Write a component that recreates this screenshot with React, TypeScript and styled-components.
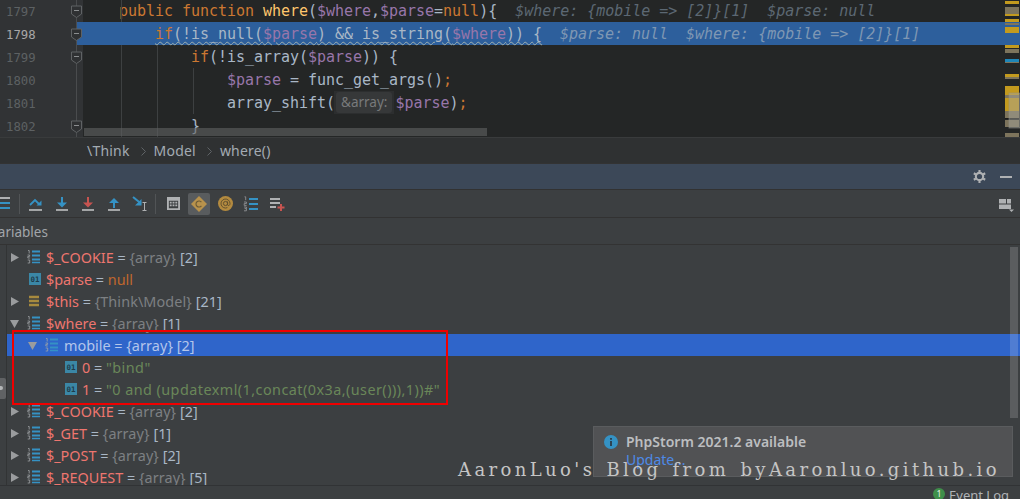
import React from "react";
import styled, { createGlobalStyle } from "styled-components";

const Global = createGlobalStyle`
  html, body { margin: 0; padding: 0; background: #3c3f41; }
  * { box-sizing: border-box; }
`;

const MONO = `"DejaVu Sans Mono", "Liberation Mono", monospace`;
const SANS = `"Noto Sans", "Open Sans", sans-serif`;

const Page = styled.div`
  width: 1020px;
  height: 499px;
  overflow: hidden;
  position: relative;
  display: flex;
  flex-direction: column;
  background: #3c3f41;
  font-family: ${SANS};
`;

/* ---------- editor ---------- */
const Editor = styled.div`
  height: 138px;
  flex: none;
  position: relative;
  overflow: hidden;
  background: #242626;
  border-bottom: 1px solid #393b3c;
`;
const Row = styled.div`
  height: 23px;
  display: grid;
  grid-template-columns: 77px 6px 1fr;
  grid-template-rows: 23px;
  &:first-child { margin-top: -1px; }
`;
const LineNo = styled.div<{ $active?: boolean }>`
  background: #313335;
  border-right: 1px solid #4a4c4e;
  color: ${(p) => (p.$active ? "#a9a8a8" : "#5d6163")};
  font: 12.3px/23px ${MONO};
  padding: 2px 0 0 6px;
`;
const FoldCell = styled.div<{ $active?: boolean }>`
  background: ${(p) => (p.$active ? "#2d5f9c" : "#313335")};
`;
const FoldSvg = styled.svg`
  display: block;
  margin-left: -6px;
  width: 12px;
  height: 23px;
  overflow: visible;
`;
const Code = styled.div<{ $active?: boolean; $indent: number }>`
  background: ${(p) => (p.$active ? "#2d5f9c" : "transparent")};
  color: #a9b7c6;
  font: 15px/23px ${MONO};
  letter-spacing: -0.03px;
  padding: 1px 0 0 ${(p) => 36 + p.$indent * 36}px;
  white-space: pre;
`;
const Kw = styled.span`color: #cc7832;`;
const Fn = styled.span`color: #ffc66d;`;
const Var = styled.span`color: #9876aa;`;
const Squiggle = styled.span`
  text-decoration: underline wavy #9fb0b0 1px;
  text-underline-offset: 2px;
`;
const Hint = styled.span<{ $on?: boolean }>`
  font-style: italic;
  color: ${(p) => (p.$on ? "#7f97b3" : "#5c6873")};
  margin-left: 18px;
`;
const ParamHint = styled.span`
  display: inline-block;
  height: 23px;
  padding: 0 2px;
  margin: -1px 1px 0 -1px;
  background: #2c2e2f;
  vertical-align: top;
`;
const ParamLabel = styled.span`
  display: inline-block;
  height: 21px;
  margin-top: 1px;
  padding: 0 5px;
  background: #363839;
  border-radius: 3px;
  color: #787a7b;
  font: 13.5px/21px ${SANS};
  letter-spacing: 0;
  vertical-align: top;
`;
const Guide = styled.div<{ $x: number; $y: number; $h: number }>`
  position: absolute;
  left: ${(p) => p.$x}px;
  top: ${(p) => p.$y}px;
  height: ${(p) => p.$h}px;
  width: 1px;
  background: #3d4041;
`;
const HScroll = styled.div`
  position: absolute;
  left: 84px;
  bottom: 1px;
  width: 403px;
  height: 8px;
  background: rgba(96, 98, 98, 0.6);
`;
const Stripes = styled.svg`
  position: absolute;
  right: 0;
  top: 0;
  width: 15px;
  height: 137px;
`;

/* ---------- breadcrumb ---------- */
const Crumbs = styled.div`
  height: 25px;
  flex: none;
  display: flex;
  align-items: center;
  padding-left: 87px;
  background: #2f3132;
  color: #a3abb2;
  font-size: 14px;
  letter-spacing: 0.2px;
`;
const Chevron = styled.svg`
  width: 5px;
  height: 9px;
  margin: 1px 8px 0 11px;
`;

/* ---------- debug panel ---------- */
const TitleBar = styled.div`
  height: 26px;
  flex: none;
  display: flex;
  align-items: center;
  justify-content: flex-end;
  gap: 14px;
  padding-right: 8px;
  background: #3c4858;
  border-top: 1px solid #333;
`;
const Toolbar = styled.div`
  height: 29px;
  flex: none;
  display: flex;
  align-items: center;
  padding-right: 5px;
  border-top: 1px solid #323232;
  border-bottom: 1px solid #323232;
  background: #3c3f41;
`;
const ToolSlot = styled.div<{ $on?: boolean }>`
  width: 22px;
  height: 22px;
  margin-right: 4px;
  flex: none;
  display: flex;
  align-items: center;
  justify-content: center;
  border-radius: 2px;
  background: ${(p) => (p.$on ? "#595c5e" : "transparent")};
`;
const ToolSep = styled.div<{ $l: number; $r: number }>`
  width: 1px;
  height: 20px;
  flex: none;
  background: #515456;
  margin: 0 ${(p) => p.$r}px 0 ${(p) => p.$l}px;
`;
const Spacer = styled.div`flex: 1;`;
const VarHead = styled.div`
  height: 27px;
  flex: none;
  padding-top: 1px;
  color: #a2a6aa;
  font-size: 13.5px;
  line-height: 26px;
  text-indent: -10px;
  border-bottom: 1px solid #333;
`;
const TreeWrap = styled.div`
  flex: 1;
  min-height: 0;
  position: relative;
  overflow: hidden;
  padding: 1px 0 0 7px;
`;
const LeftRail = styled.div`
  position: absolute;
  left: 6px;
  top: 0;
  bottom: 0;
  width: 1px;
  background: #323435;
`;
const RailHandle = styled.div`
  position: absolute;
  left: 0;
  top: 133px;
  width: 6px;
  height: 21px;
  background: #606264;
  border-radius: 0 2px 2px 0;
  &::after {
    content: "";
    position: absolute;
    left: 0;
    top: 8px;
    width: 3px;
    height: 4px;
    background: #b4b6b8;
    border-radius: 0 2px 2px 0;
  }
`;
const VScroll = styled.div`
  position: absolute;
  right: 2px;
  top: 2px;
  width: 8px;
  height: 171px;
  background: rgba(255, 255, 255, 0.16);
`;
const TreeRow = styled.div<{ $sel?: boolean; $depth: number }>`
  height: 22px;
  display: flex;
  align-items: center;
  padding-left: ${(p) => p.$depth * 18}px;
  background: ${(p) => (p.$sel ? "#2f65ca" : "transparent")};
  font-size: 14.4px;
  white-space: pre;
`;
const Arrow = styled.svg`
  width: 9px;
  height: 9px;
  flex: none;
  margin: 0 8px 0 3px;
`;
const ArrowGap = styled.div`
  width: 22px;
  flex: none;
`;
const Name = styled.span<{ $sel?: boolean }>`
  margin-left: 5px;
  color: ${(p) => (p.$sel ? "#b4c6ea" : "#ee766f")};
`;
const Eq = styled.span<{ $sel?: boolean }>`
  color: ${(p) => (p.$sel ? "#b4c6ea" : "#a9b7c6")};
`;
const TypeTxt = styled.span<{ $sel?: boolean }>`
  color: ${(p) => (p.$sel ? "#b4c6ea" : "#7d8083")};
  letter-spacing: 0.1px;
`;
const Count = styled.span<{ $sel?: boolean }>`
  color: ${(p) => (p.$sel ? "#b4c6ea" : "#a9b7c6")};
`;
const NullTxt = styled.span`color: #c0672d;`;
const Str = styled.span`
  color: #6a8759;
  letter-spacing: 0.45px;
`;

const RedBox = styled.div`
  position: absolute;
  left: 12px;
  top: 330px;
  width: 436px;
  height: 75px;
  border: 2px solid #f00000;
  pointer-events: none;
`;

/* ---------- notification ---------- */
const Toast = styled.div`
  position: absolute;
  left: 593px;
  top: 426px;
  width: 420px;
  height: 51px;
  background: #515254;
  border: 1px solid #5a5c5e;
  padding: 6px 0 0 10px;
  display: grid;
  grid-template-columns: 14px 1fr;
  column-gap: 8px;
  align-content: start;
`;
const ToastTitle = styled.div`
  color: #bcbec0;
  font-size: 14px;
  font-weight: 600;
  line-height: 18px;
`;
const ToastLink = styled.div`
  grid-column: 2;
  color: #4d8ae8;
  font-size: 14px;
  line-height: 18px;
`;
const Watermark = styled.div`
  position: absolute;
  left: 458px;
  top: 458px;
  color: #c5c5c5;
  font-family: "DejaVu Serif", serif;
  font-size: 18px;
  line-height: 24px;
  letter-spacing: 3.4px;
  word-spacing: 2px;
  white-space: pre;
`;

/* ---------- status ---------- */
const Status = styled.div`
  height: 14px;
  flex: none;
  border-top: 1px solid #313335;
  background: #3c3f41;
  display: flex;
  justify-content: flex-end;
  padding-right: 11px;
  gap: 4px;
  color: #b0b3b6;
  font-size: 13px;
  line-height: 18px;
  overflow: hidden;
`;
const Badge = styled.span`
  display: inline-block;
  width: 12px;
  height: 12px;
  margin-top: 2px;
  border-radius: 50%;
  background: #3f8f4a;
  color: #e8f2e8;
  font-size: 9px;
  line-height: 12px;
  text-align: center;
`;

/* ---------- icons ---------- */
const BLUE = "#3592c4";
const GREY = "#afb1b3";
const RED = "#c75450";

const Fold = () => (
  <FoldSvg viewBox="0 0 12 23">
    <path d="M.5 7h10v8l-5 3.5-5-3.5z" fill="#2f3133" stroke="#5f6264" />
    <path d="M3 11.5h5" stroke="#8a8d8f" />
  </FoldSvg>
);
const Icon = styled.svg`
  width: 16px;
  height: 16px;
  display: block;
  flex: none;
`;
const ListIcon = () => (
  <Icon viewBox="0 0 14 14" style={{ width: 14, height: 14 }}>
    <path d="M5 1.5h8M5 5.5h8M5 9.5h8" stroke={BLUE} strokeWidth="2" />
    <path d="M5 12.5h8" stroke={BLUE} strokeWidth="1.5" />
    <path d="M1 0.5h1.2v3M0.6 5h2v1.4H0.8V8h2M0.7 10h2v3h-2" stroke="#a0a3a6" strokeWidth=".8" fill="none" />
  </Icon>
);
const PrimIcon = () => (
  <Icon viewBox="0 0 12 12" style={{ width: 12, height: 12 }}>
    <rect width="12" height="12" fill="#3b87a6" />
    <text x="6" y="9" fontSize="7.5" fontWeight="700" fill="#1f3c4b" textAnchor="middle" fontFamily={MONO}>01</text>
  </Icon>
);
const ObjIcon = () => (
  <Icon viewBox="-2 0 14 12" style={{ width: 14, height: 12 }}>
    <path d="M0 2h10M0 6h10M0 10h10" stroke="#a78a3e" strokeWidth="2.4" />
  </Icon>
);
const StepOver = () => (
  <Icon viewBox="0 0 16 16">
    <path d="M2 9l5-5 4 4" fill="none" stroke={BLUE} strokeWidth="1.8" />
    <path d="M8.5 9.5h5v-5z" fill={BLUE} />
    <path d="M1 14h13" stroke={GREY} strokeWidth="1.8" />
  </Icon>
);
const StepDown = ({ c }: { c: string }) => (
  <Icon viewBox="0 0 16 16">
    <path d="M8 1v6" stroke={c} strokeWidth="2" />
    <path d="M3 6.5h10L8 11.5z" fill={c} />
    <path d="M2 14h12" stroke={GREY} strokeWidth="1.8" />
  </Icon>
);
const StepUp = () => (
  <Icon viewBox="0 0 16 16">
    <path d="M8 12V6" stroke={BLUE} strokeWidth="2" />
    <path d="M3 7h10L8 2z" fill={BLUE} />
    <path d="M2 14h12" stroke={GREY} strokeWidth="1.8" />
  </Icon>
);
const RunToCursor = () => (
  <Icon viewBox="0 0 16 16" style={{ overflow: "visible" }}>
    <path d="M1 1l8 6.5" stroke={BLUE} strokeWidth="2" />
    <path d="M9.5 3v6.5H3z" fill={BLUE} />
    <path d="M10.5 6.5h4M10.5 14.5h4M12.5 6.5v8" stroke={GREY} strokeWidth="1" fill="none" />
  </Icon>
);
const Calc = () => (
  <Icon viewBox="0 0 14 14" style={{ width: 13, height: 13 }}>
    <path fillRule="evenodd" d="M0 0h14v14H0zM2 4v8h10V4z" fill={GREY} />
    <path d="M3 5h2v2H3zM6 5h2v2H6zM9 5h2v2H9zM3 8h2v2H3zM6 8h2v2H6zM9 8h2v2H9z" fill={GREY} />
  </Icon>
);
const Diamond = () => (
  <Icon viewBox="0 0 16 16">
    <path d="M8 0l8 8-8 8-8-8z" fill="#b8924c" />
    <path d="M10.4 6.2A3 3 0 1 0 10.4 9.8" fill="none" stroke="#6b5a35" strokeWidth="1.1" />
  </Icon>
);
const AtIcon = () => (
  <Icon viewBox="0 0 16 16" style={{ width: 15, height: 15 }}>
    <circle cx="8" cy="8" r="8" fill="#b38a3f" />
    <circle cx="8" cy="8" r="2.2" fill="none" stroke="#5f4e2e" strokeWidth="1" />
    <path d="M10.2 5.8v3.4c0 1.6 2.6 1.4 2.6-1.2A4.8 4.8 0 1 0 10 12.4" fill="none" stroke="#5f4e2e" strokeWidth="1" />
  </Icon>
);
const OrderedIcon = () => (
  <Icon viewBox="0 0 16 16">
    <path d="M6 3h9M6 8h9M6 13h9" stroke={BLUE} strokeWidth="2" />
    <path d="M1.5 .8h1.2v3.4M1 6h2.4v1.6H1.2v1.8h2.4M1 11h2.4v1.6H1.6M3.4 12.6v2.2H1" stroke="#8e9194" strokeWidth=".9" fill="none" />
  </Icon>
);
const AddWatch = () => (
  <Icon viewBox="0 0 16 16">
    <path d="M1 3h10M1 7h10M1 11h6" stroke={GREY} strokeWidth="1.8" />
    <path d="M12 8v7M8.5 11.5h7" stroke={RED} strokeWidth="2" />
  </Icon>
);
const Rerun = () => (
  <Icon viewBox="0 0 10 16" style={{ width: 10, height: 16 }}>
    <path d="M0 2h10" stroke={GREY} strokeWidth="2" />
    <path d="M0 7h10M0 12h10" stroke={BLUE} strokeWidth="2" />
  </Icon>
);
const LayoutIcon = () => (
  <Icon viewBox="0 0 16 16">
    <path d="M0 3h7v4.5H0zM8 3h4v4.5H8zM0 8.5h12V13H0z" fill={GREY} />
    <path d="M10 13.5h5L12.5 16z" fill={GREY} />
  </Icon>
);
const Gear = () => (
  <Icon viewBox="0 0 16 16" style={{ width: 13, height: 13 }}>
    <circle cx="8" cy="8" r="4.5" fill="none" stroke={GREY} strokeWidth="2.6" />
    <path d="M8 0v3M8 13v3M1 4l2.6 1.5M12.4 10.5L15 12M1 12l2.6-1.5M12.4 5.5L15 4" stroke={GREY} strokeWidth="2.6" />
  </Icon>
);
const Minimize = styled.div`
  width: 12px;
  height: 2px;
  background: ${GREY};
`;
const TriRight = () => (
  <Arrow viewBox="0 0 9 9"><path d="M1 0l8 4.5-8 4.5z" fill="#9a9c9e" /></Arrow>
);
const TriDown = () => (
  <Arrow viewBox="0 0 9 9"><path d="M0 1h9L4.5 9z" fill="#9a9c9e" /></Arrow>
);
const Info = () => (
  <Icon viewBox="0 0 14 14" style={{ width: 14, height: 14, marginTop: 2 }}>
    <circle cx="7" cy="7" r="7" fill="#3592c4" />
    <path d="M7 6v5M7 3v1.8" stroke="#2b3b48" strokeWidth="1.8" />
  </Icon>
);

/* ---------- data ---------- */
type V = {
  name: string;
  kind: "list" | "prim" | "obj";
  depth: number;
  open?: "r" | "d";
  type?: string;
  count?: string;
  nul?: boolean;
  str?: string;
  sel?: boolean;
};
const VARS: V[] = [
  { name: "$_COOKIE", kind: "list", depth: 0, open: "r", type: "{array}", count: "[2]" },
  { name: "$parse", kind: "prim", depth: 0, nul: true },
  { name: "$this", kind: "obj", depth: 0, open: "r", type: "{Think\\Model}", count: "[21]" },
  { name: "$where", kind: "list", depth: 0, open: "d", type: "{array}", count: "[1]" },
  { name: "mobile", kind: "list", depth: 1, open: "d", type: "{array}", count: "[2]", sel: true },
  { name: "0", kind: "prim", depth: 2, str: '"bind"' },
  { name: "1", kind: "prim", depth: 2, str: '"0 and (updatexml(1,concat(0x3a,(user())),1))#"' },
  { name: "$_COOKIE", kind: "list", depth: 0, open: "r", type: "{array}", count: "[2]" },
  { name: "$_GET", kind: "list", depth: 0, open: "r", type: "{array}", count: "[1]" },
  { name: "$_POST", kind: "list", depth: 0, open: "r", type: "{array}", count: "[2]" },
  { name: "$_REQUEST", kind: "list", depth: 0, open: "r", type: "{array}", count: "[5]" },
];

const STRIPE_COLORS: [number, number, string][] = [
  [1, 3, "#c39a1e"], [7, 3, "#7d745c"], [10, 5, "#7d745c"], [14, 2, "#c39a1e"],
  [19, 3, "#c39a1e"], [23, 2, "#7d745c"], [27, 3, "#c39a1e"], [30, 3, "#c39a1e"],
  [45, 3, "#c39a1e"], [49, 4, "#7d745c"], [59, 3, "#1e86b8"], [62, 1, "#7d745c"],
  [74, 3, "#c39a1e"], [77, 2, "#7d745c"], [86, 9, "#c39a1e"], [95, 3, "#7d745c"],
  [98, 13, "#c39a1e"], [111, 8, "#7d745c"], [118, 1, "#1a1a1a"], [120, 7, "#7d745c"], [133, 4, "#7d745c"],
];

const VarLine = ({ v }: { v: V }) => (
  <TreeRow $sel={v.sel} $depth={v.depth}>
    {v.open === "r" ? <TriRight /> : v.open === "d" ? <TriDown /> : <ArrowGap />}
    {v.kind === "list" ? <ListIcon /> : v.kind === "obj" ? <ObjIcon /> : <PrimIcon />}
    <Name $sel={v.sel}>{v.name}</Name>
    <Eq $sel={v.sel}> = </Eq>
    {v.nul && <NullTxt>null</NullTxt>}
    {v.str && <Str>{v.str}</Str>}
    {v.type && <TypeTxt $sel={v.sel}>{v.type} </TypeTxt>}
    {v.count && <Count $sel={v.sel}>{v.count}</Count>}
  </TreeRow>
);

export default function App() {
  return (
    <Page>
      <Global />
      <Editor>
        <Row>
          <LineNo>1797</LineNo>
          <FoldCell><Fold /></FoldCell>
          <Code $indent={0}>
            <Kw>public function </Kw><Fn>where</Fn>(<Var>$where</Var>,<Var>$parse</Var>=<Kw>null</Kw>){'{'}
            <Hint>$where: {"{mobile => [2]}[1]"}  $parse: null</Hint>
          </Code>
        </Row>
        <Row>
          <LineNo $active>1798</LineNo>
          <FoldCell $active><Fold /></FoldCell>
          <Code $active $indent={1}>
            <Squiggle><Kw>if</Kw>(!is_null(<Var>$parse</Var>) && is_string(<Var>$where</Var>)) {'{'}</Squiggle>
            <Hint $on>$parse: null  $where: {"{mobile => [2]}[1]"}</Hint>
          </Code>
        </Row>
        <Row>
          <LineNo>1799</LineNo>
          <FoldCell><Fold /></FoldCell>
          <Code $indent={2}><Kw>if</Kw>(!is_array(<Var>$parse</Var>)) {'{'}</Code>
        </Row>
        <Row>
          <LineNo>1800</LineNo>
          <FoldCell />
          <Code $indent={3}><Var>$parse</Var> = func_get_args()<Kw>;</Kw></Code>
        </Row>
        <Row>
          <LineNo>1801</LineNo>
          <FoldCell />
          <Code $indent={3}>array_shift(<ParamHint><ParamLabel>&amp;array:</ParamLabel></ParamHint><Var>$parse</Var>)<Kw>;</Kw></Code>
        </Row>
        <Row>
          <LineNo>1802</LineNo>
          <FoldCell><Fold /></FoldCell>
          <Code $indent={2}>{'}'}</Code>
        </Row>
        <Guide $x={121} $y={0} $h={22} />
        <Guide $x={121} $y={45} $h={92} />
        <Guide $x={157} $y={45} $h={92} />
        <Guide $x={193} $y={68} $h={46} />
        <HScroll />
        <Stripes viewBox="0 0 15 137">
          {STRIPE_COLORS.map(([y, h, c], i) => (
            <rect key={i} x="0" y={y} width="14" height={h} fill={c} />
          ))}
          <rect x="4" y="93" width="11" height="35" fill="#a8a8a0" fillOpacity=".45" stroke="#8f8f88" strokeOpacity=".5" />
        </Stripes>
      </Editor>
      <Crumbs>
        \Think
        <Chevron viewBox="0 0 5 9"><path d="M.5.5l4 4-4 4" fill="none" stroke="#5f6366" /></Chevron>
        Model
        <Chevron viewBox="0 0 5 9"><path d="M.5.5l4 4-4 4" fill="none" stroke="#5f6366" /></Chevron>
        where()
      </Crumbs>
      <TitleBar>
        <Gear />
        <Minimize />
      </TitleBar>
      <Toolbar>
        <Rerun />
        <ToolSep $l={9} $r={5} />
        <ToolSlot><StepOver /></ToolSlot>
        <ToolSlot><StepDown c={BLUE} /></ToolSlot>
        <ToolSlot><StepDown c={RED} /></ToolSlot>
        <ToolSlot><StepUp /></ToolSlot>
        <ToolSlot><RunToCursor /></ToolSlot>
        <ToolSep $l={0} $r={6} />
        <ToolSlot><Calc /></ToolSlot>
        <ToolSlot $on><Diamond /></ToolSlot>
        <ToolSlot><AtIcon /></ToolSlot>
        <ToolSlot><OrderedIcon /></ToolSlot>
        <ToolSlot><AddWatch /></ToolSlot>
        <Spacer />
        <LayoutIcon />
      </Toolbar>
      <VarHead>Variables</VarHead>
      <TreeWrap>
        <LeftRail />
        <RailHandle />
        {VARS.map((v, i) => <VarLine key={i} v={v} />)}
        <VScroll />
      </TreeWrap>
      <Status>
        <Badge>1</Badge>
        Event Log
      </Status>
      <RedBox />
      <Toast>
        <Info />
        <ToastTitle>PhpStorm 2021.2 available</ToastTitle>
        <ToastLink>Update...</ToastLink>
      </Toast>
      <Watermark>AaronLuo's Blog from byAaronluo.github.io</Watermark>
    </Page>
  );
}
